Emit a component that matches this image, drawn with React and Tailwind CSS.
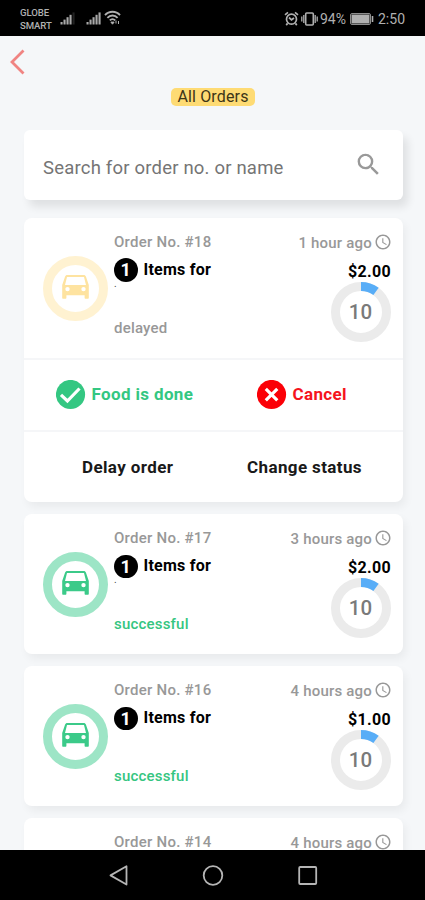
import { MdAccessTime, MdSearch } from 'react-icons/md';

const orders = [
  { id: 18, ago: '1 hour ago', price: '$2.00', status: 'delayed', dot: true, open: true },
  { id: 17, ago: '3 hours ago', price: '$2.00', status: 'successful', dot: true },
  { id: 16, ago: '4 hours ago', price: '$1.00', status: 'successful' },
  { id: 14, ago: '4 hours ago' },
];

function Signal({ bars }) {
  return (
    <svg width="16" height="14" viewBox="0 0 16 14" fill="#a9a9a9">
      {[0, 1, 2, 3, 4].map((i) => (
        <rect key={i} x={0.5 + i * 3} y={11 - i * 2.4} width="2.1" height={2.5 + i * 2.4} opacity={i < bars ? 1 : 0.2} />
      ))}
    </svg>
  );
}

function StatusBar() {
  return (
    <header className="h-[35.5px] shrink-0 bg-black text-[#b0b0b0] flex items-center pl-5 pr-[19px]">
      <div className="text-[9.6px] leading-[13px] w-[40px] pt-[2px] font-medium tracking-[-0.1px]">
        <p>GLOBE</p>
        <p>SMART</p>
      </div>
      <div className="flex items-center">
        <Signal bars={4} />
        <span className="w-[10px]" />
        <Signal bars={5} />
        <svg width="17" height="15" viewBox="0 0 17 15" fill="none" stroke="#b0b0b0" strokeWidth="1.8" className="ml-[2px]">
          <path d="M1 5.2C5 .6 12 .6 16 5.2M3.4 7.9c2.8-3.2 7.4-3.2 10.2 0M5.8 10.4c1.6-1.7 3.8-1.7 5.4 0" />
          <path d="M8.5 14.2l-1.6-2.1h3.2zM12 10.5v3M14.5 11v3" fill="#b0b0b0" strokeWidth="1" />
        </svg>
      </div>
      <div className="ml-auto flex items-center pt-[2px]">
        <svg width="15" height="15" viewBox="0 0 15 15" fill="none" stroke="#b0b0b0" strokeWidth="1.7">
          <circle cx="7.5" cy="8.2" r="5" />
          <path d="M1 3.8l3-2.5M14 3.8l-3-2.5M5 6.5l2.5 2.3L10 7M3.6 12.4l-1.4 1.7M11.4 12.4l1.4 1.7" />
        </svg>
        <svg width="17" height="14" viewBox="0 0 17 14" fill="none" stroke="#b0b0b0" strokeWidth="1.6" className="ml-[2px]">
          <rect x="4.7" y="1" width="7.6" height="12" rx="1" />
          <path d="M2.8 3v8M.8 4.5v5M14.2 3v8M16.2 4.5v5" strokeWidth="1.3" />
        </svg>
        <span className="ml-[2px] pt-[1px] text-[14px] w-[27px]">94%</span>
        <svg width="25" height="12" viewBox="0 0 25 12" className="ml-[3px]">
          <rect x=".5" y=".5" width="20" height="11" rx="1.5" fill="none" stroke="#8d8d8d" />
          <rect x="1.5" y="1.5" width="18" height="9" fill="#b0b0b0" />
          <path d="M22.5 3v6" stroke="#b0b0b0" strokeWidth="1.6" />
        </svg>
        <span className="ml-[3px] pt-[1px] text-[14px] w-[28px]">2:50</span>
      </div>
    </header>
  );
}

function Car() {
  return (
    <svg width="27" height="24" viewBox="0 0 27 24" fill="currentColor" fillRule="evenodd">
      <path d="M5.3 0h16.4c1.1 0 1.9.6 2.2 1.6L26.8 10v12.8c0 .6-.4 1-1 1h-2.2c-.6 0-1-.4-1-1V20.3H4.4v2.5c0 .6-.4 1-1 1H1.2c-.6 0-1-.4-1-1V10l2.9-8.400C3.4.6 4.200 0 5.300 0zM5 1.900L3 9.900h21l-2-8zM5.500 11.900a2.200 2.200 0 1 0 0 4.400 2.200 2.200 0 0 0 0-4.400zM21.500 11.900a2.200 2.200 0 1 0 0 4.400 2.200 2.200 0 0 0 0-4.400z" />
    </svg>
  );
}

function Progress({ value }) {
  const len = 2 * Math.PI * 25.5;
  return (
    <div className="grid size-[60px] place-items-center">
      <svg width="60" height="60" fill="none" strokeWidth="9" className="col-start-1 row-start-1">
        <circle cx="30" cy="30" r="25.5" stroke="#ebebeb" />
        <circle cx="30" cy="30" r="25.5" stroke="#58adf7" strokeDasharray={`${(len * value) / 100} ${len}`} transform="rotate(-90 30 30)" />
      </svg>
      <span className="col-start-1 row-start-1 text-[20.5px] leading-[24px] font-medium text-[#7a7a7a] -mt-[1px] pr-[1px]">{value}</span>
    </div>
  );
}

function OrderCard({ order }) {
  const done = order.status !== 'delayed';
  return (
    <section className="shrink-0 rounded-[8px] bg-white shadow-[3px_5px_8px_rgba(0,0,0,0.05)]">
      <div className="flex h-[140px] pl-[18.5px] pr-[12px]">
        {order.status && (
          <div className={`mt-[37.5px] size-[65px] shrink-0 rounded-full border-[9px] flex items-center justify-center ${
            done ? 'border-[#9de5c6] text-[#3bca89]' : 'border-[#fff2d1] text-[#fee3a0]'
          }`}>
            <div className="-mt-[3px]"><Car /></div>
          </div>
        )}
        <div className={`flex-1 whitespace-nowrap ${order.status ? 'ml-[6.5px]' : 'ml-[71.5px]'}`}>
          <p className="mt-[13.5px] text-[15px] leading-[20px] font-medium text-[#989898] tracking-[0.25px]">Order No. #{order.id}</p>
          {order.status && (
            <>
              <div className="mt-[6.5px] flex h-[24px] items-center">
                <span className="size-[23.5px] rounded-full bg-black text-white text-[18px] leading-[23px] font-bold text-center">1</span>
                <span className="ml-[6px] text-[16px] font-bold text-black tracking-[0.25px]">Items for</span>
              </div>
              <p className="h-[35.5px] text-[10px] leading-[3px] text-[#444]">{order.dot ? '.' : ''}</p>
              <p className={`text-[15px] leading-[20px] font-medium tracking-[0.2px] ${done ? 'text-[#35c581]' : 'text-[#989898]'}`}>{order.status}</p>
            </>
          )}
        </div>
        <div className="flex flex-col items-end">
          <div className="mt-[14.5px] flex items-center gap-[2px] text-[#989898]">
            <span className="text-[15px] leading-[20px] font-medium tracking-[0.2px]">{order.ago}</span>
            <MdAccessTime size={18} className="-mr-[1px] -mt-[2px]" />
          </div>
          {order.price && (
            <>
              <p className="mt-[9px] text-[16px] leading-[20px] font-bold text-black tracking-[0.35px]">{order.price}</p>
              <div className="mt-[0.5px]">
                <Progress value={10} />
              </div>
            </>
          )}
        </div>
      </div>
      {order.open && (
        <>
          <div className="flex h-[72px] items-center border-t-2 border-[#f5f6f8] pl-[31.5px] text-[17px] font-bold">
            <button className="flex w-[201px] items-center text-[#34c782]">
              <svg width="30" height="30" viewBox="0 0 30 30">
                <circle cx="14.5" cy="14.5" r="14.6" fill="#34c782" />
                <path d="M5 14.800l6.400 6.200L23.500 8.500" fill="none" stroke="#fff" strokeWidth="3.2" />
              </svg>
              <span className="ml-[6px] tracking-[0.36px]">Food is done</span>
            </button>
            <button className="flex items-center text-[#f5141c]">
              <svg width="30" height="30" viewBox="0 0 30 30">
                <circle cx="14.500" cy="14.500" r="14.600" fill="#fb0007" />
                <path d="M8.800 8.800l11.500 11.500M20.300 8.800L8.800 20.300" fill="none" stroke="#fff" strokeWidth="3.2" />
              </svg>
              <span className="ml-[6px] tracking-[0.36px]">Cancel</span>
            </button>
          </div>
          <div className="flex h-[72.3px] items-center border-t-2 border-[#f5f6f8] pl-[58px] pt-[1px] text-[17px] font-bold text-[#191919] tracking-[0.38px]">
            <button className="w-[165px] text-left">Delay order</button>
            <button>Change status</button>
          </div>
        </>
      )}
    </section>
  );
}

export default function App() {
  return (
    <div className="flex h-[900px] w-[425px] flex-col overflow-hidden bg-[#f5f7f9] font-['Roboto',sans-serif]">
      <StatusBar />

      <main className="flex min-h-0 flex-1 flex-col overflow-hidden pl-[24px] pr-[22px]">
        <svg width="16" height="26" viewBox="0 0 16 26" fill="none" stroke="#f08482" strokeWidth="2.8" className="-ml-[15px] mt-[13.5px] shrink-0">
          <path d="M14.5 1.5L3 13l11.5 11.5" />
        </svg>
        <h1 className="mt-[12.5px] ml-[147px] h-[18.5px] w-[84px] shrink-0 rounded-[5px] bg-[#fedb74] text-center text-[16px] leading-[18px] tracking-[0.15px] text-[#3d3517]">
          All Orders
        </h1>

        <div className="mt-[24px] flex h-[70px] shrink-0 items-center justify-between rounded-[6px] bg-white pl-[19px] pr-[20px] shadow-[5px_7px_9px_rgba(0,0,0,0.09)]">
          <span className="pt-[8px] text-[18.5px] tracking-[0.2px] text-[#757575]">Search for order no. or name</span>
          <MdSearch size={29} className="-mt-[1px] text-[#999]" />
        </div>

        <div className="mt-[18px] flex flex-col gap-[12px]">
          {orders.map((o) => (
            <OrderCard key={o.id} order={o} />
          ))}
        </div>
      </main>

      {/* Android navigation */}
      <nav className="h-[50.5px] shrink-0 bg-black">
        <svg width="425" height="50" fill="none" stroke="#b5b5b5" strokeWidth="1.8" strokeLinejoin="round">
          <path d="M126.5 16.3v18.2l-16-9.1z" />
          <circle cx="213" cy="25.5" r="9.3" />
          <rect x="299.2" y="17" width="17" height="17" rx="1" />
        </svg>
      </nav>
    </div>
  );
}
